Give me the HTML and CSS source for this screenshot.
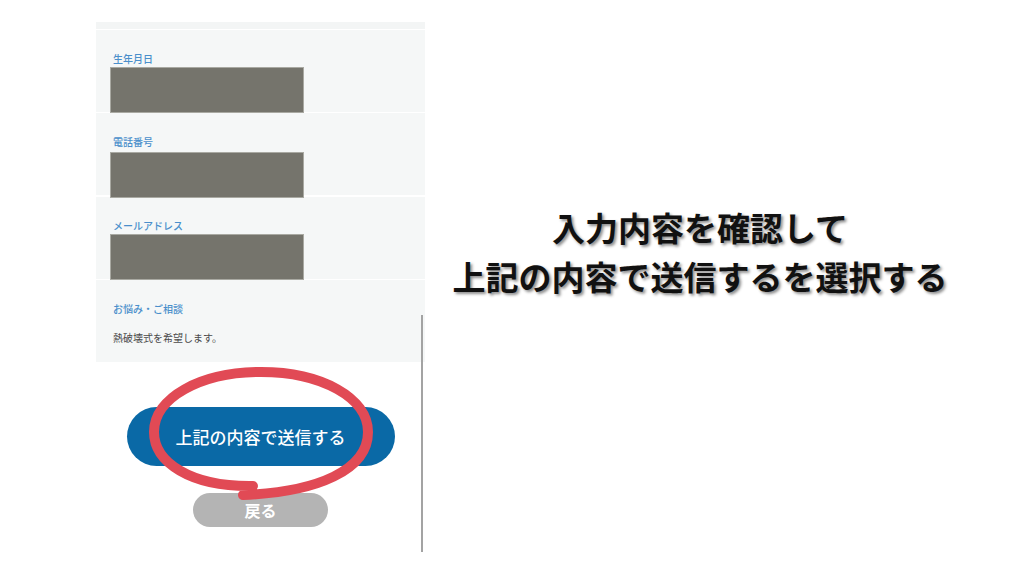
FILE: index.html
```html
<!DOCTYPE html>
<html lang="ja">
<head>
<meta charset="utf-8">
<title>確認画面</title>
<link rel="stylesheet" href="styles.css">
</head>
<body>
<div class="page">
  <div class="phone">
    <div class="strip"></div>
    <div class="field">
      <div class="label">生年月日</div>
      <div class="redact"></div>
    </div>
    <div class="field field-2">
      <div class="label">電話番号</div>
      <div class="redact"></div>
    </div>
    <div class="field field-3">
      <div class="label">メールアドレス</div>
      <div class="redact"></div>
    </div>
    <div class="field">
      <div class="label">お悩み・ご相談</div>
      <div class="value">熱破壊式を希望します。</div>
    </div>
    <div class="actions">
      <div class="btn-submit">上記の内容で送信する</div>
      <div class="btn-back">戻る</div>
    </div>
    <div class="scrollbar"></div>
  </div>
  <div class="caption">
    <p>入力内容を確認して</p>
    <p>上記の内容で送信するを選択する</p>
  </div>
  <svg class="annot" width="1024" height="576" viewBox="0 0 1024 576" aria-hidden="true">
    <path d="M 253 486 C 190 487 154 462 154 432 C 154 398 200 372 261 372 C 322 372 368 398 368 432 C 368 470 318 492 243 495"
      fill="none" stroke="#e14a55" stroke-width="10" stroke-linecap="round"/>
  </svg>
</div>
</body>
</html>
```

FILE: styles.css
```css
html, body {
  margin: 0;
  padding: 0;
  background: #ffffff;
}

body {
  font-family: "Noto Sans CJK JP", "Noto Sans", sans-serif;
}

.page {
  position: relative;
  width: 1024px;
  height: 576px;
  display: flex;
  overflow: hidden;
}

.phone {
  position: relative;
  margin-left: 96px;
  width: 329px;
  padding-top: 22px;
  display: flex;
  flex-direction: column;
}

.strip {
  height: 7px;
  background: #f3f5f5;
  margin-bottom: 1px;
}

.field {
  height: 82px;
  box-sizing: border-box;
  padding: 22px 0 0 17px;
  background: #f5f7f7;
  margin-bottom: 1px;
}

.field-2 .redact {
  margin-top: 3px;
}

.field-3 {
  margin-top: 1px;
}

.label {
  font-size: 10px;
  line-height: 14px;
  font-weight: 500;
  color: #4a8fcb;
}

.redact {
  position: relative;
  z-index: 1;
  margin: 1px 0 0 -3px;
  width: 194px;
  height: 46px;
  box-sizing: border-box;
  background: #75746c;
  border: 1px solid #a9a9a2;
}

.value {
  margin-top: 15px;
  font-size: 10px;
  line-height: 14px;
  color: #4a4a4a;
}

.actions {
  display: flex;
  flex-direction: column;
  align-items: center;
}

.btn-submit {
  margin-top: 44px;
  width: 268px;
  height: 59px;
  border-radius: 30px;
  background: #0a69a6;
  color: #ffffff;
  font-size: 17px;
  font-weight: 500;
  line-height: 59px;
  text-align: center;
}

.btn-back {
  margin-top: 27px;
  width: 135px;
  height: 34px;
  border-radius: 17px;
  background: #b4b4b4;
  color: #ffffff;
  font-size: 16px;
  font-weight: 700;
  line-height: 34px;
  text-align: center;
}

.scrollbar {
  position: absolute;
  left: 325px;
  top: 315px;
  width: 2px;
  height: 237px;
  background: #a3a3a3;
}

.caption {
  width: 550px;
  padding-top: 203px;
  text-align: center;
}

.caption p {
  margin: 0;
  font-size: 33px;
  line-height: 49px;
  font-weight: 700;
  color: #111111;
  text-shadow: 2px 2px 3px rgba(0, 0, 0, 0.45);
}

.annot {
  position: absolute;
  left: 0;
  top: 0;
  pointer-events: none;
}
```
